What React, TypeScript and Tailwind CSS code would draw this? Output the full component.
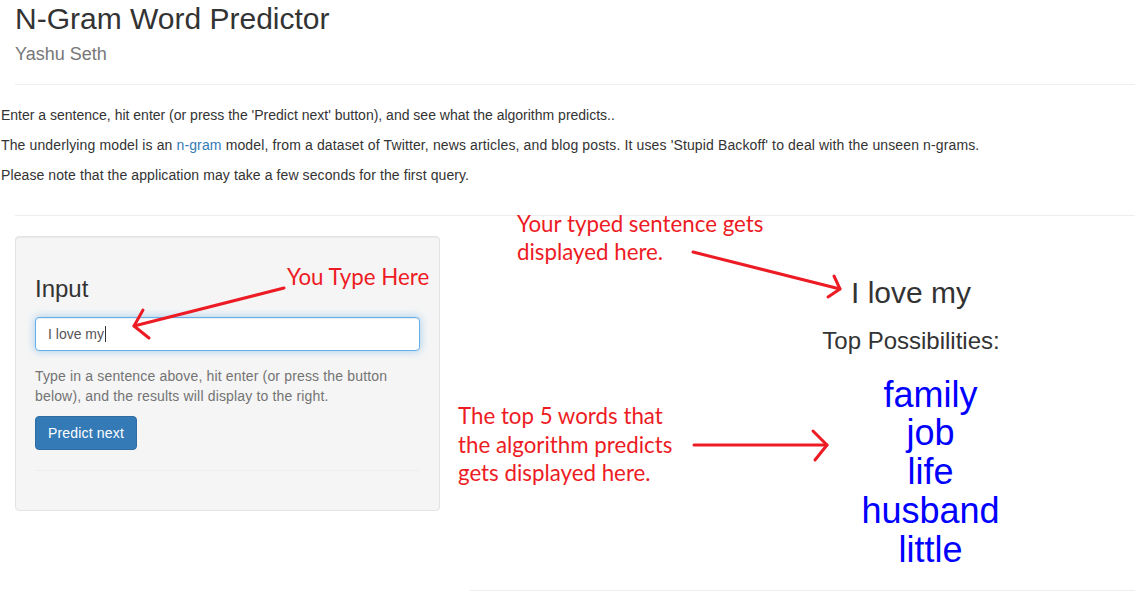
const predictions = ['family', 'job', 'life', 'husband', 'little'];

const annotationFont = { fontFamily: 'Lato, "Open Sans", sans-serif' };

const Annotations = () => (
  <>
    <svg
      className="absolute left-0 top-0 pointer-events-none"
      width="1135"
      height="600"
      viewBox="0 0 1135 600"
      fill="none"
      stroke="#ed1c24"
      strokeWidth="3"
      strokeLinecap="round"
      strokeLinejoin="round"
    >
      {/* you type here */}
      <path d="M284 288 L134 326" />
      <path d="M143 310 L134 326 L149 338" />
      {/* sentence */}
      <path d="M693 252 L840 289" />
      <path d="M834 276 L840 289 L828 297" />
      {/* top words */}
      <path d="M694 445 L827 445" />
      <path d="M813 431 L827 445 L815 460" />
    </svg>
    <div
      className="absolute left-[287px] top-[263px] text-[22.3px] leading-[28px] text-[#ed1c24] whitespace-nowrap"
      style={annotationFont}
    >
      You Type Here
    </div>
    <div
      className="absolute left-[517px] top-[210px] text-[22.3px] leading-[28px] text-[#ed1c24] whitespace-nowrap"
      style={annotationFont}
    >
      Your typed sentence gets
      <br />
      displayed here.
    </div>
    <div
      className="absolute left-[458px] top-[402px] text-[22.3px] leading-[28.5px] text-[#ed1c24] whitespace-nowrap"
      style={annotationFont}
    >
      The top 5 words that
      <br />
      the algorithm predicts
      <br />
      gets displayed here.
    </div>
  </>
);

export default function App() {
  return (
    <div
      className="relative min-h-screen w-full overflow-hidden bg-white text-[#333] text-[14px] leading-[20px]"
      style={{ fontFamily: '"Liberation Sans", Arial, sans-serif' }}
    >
      <div className="px-[15px] pt-[2px]">
        <div className="text-[30px] leading-[33px]">N-Gram Word Predictor</div>
        <div className="text-[18px] leading-[38px] text-[#777]">Yashu Seth</div>
      </div>
      <div className="ml-[15px] mt-[11px] border-t border-[#eee]" />

      <div className="mt-[20px] pl-px">
        <p className="mb-[10px]">
          Enter a sentence, hit enter (or press the 'Predict next' button), and see what the algorithm predicts..
        </p>
        <p className="mb-[10px] tracking-[0.13px]">
          The underlying model is an <a className="text-[#337ab7]">n-gram</a> model, from a dataset of Twitter,
          news articles, and blog posts. It uses 'Stupid Backoff' to deal with the unseen n-grams.
        </p>
        <p className="mb-[10px] tracking-[0.09px]">
          Please note that the application may take a few seconds for the first query.
        </p>
      </div>
      <div className="ml-[15px] mt-[30px] border-t border-[#eee]" />

      <div className="mt-[20px] flex">
        {/* sidebar */}
        <div className="w-[455px] shrink-0 px-[15px]">
          <div className="h-[275px] rounded-[4px] border border-[#e3e3e3] bg-[#f5f5f5] p-[19px] shadow-[inset_0_1px_1px_rgba(0,0,0,0.05)]">
            <div className="mt-[20px] text-[24px] leading-[26.4px]">Input</div>
            <div className="mt-[14.6px] flex h-[34px] items-center rounded-[4px] border border-[#66afe9] bg-white px-[12px] text-[#555] shadow-[inset_0_1px_1px_rgba(0,0,0,0.075),0_0_8px_rgba(102,175,233,0.6)]">
              <span>I love my</span>
              <span className="ml-px h-[16px] w-px bg-[#333]" />
            </div>
            <div className="mt-[15px] text-[#737373] tracking-[0.16px]">
              Type in a sentence above, hit enter (or press the button below), and the results will display to the
              right.
            </div>
            <button className="mt-[10px] h-[34px] rounded-[4px] border border-[#2e6da4] bg-[#337ab7] px-[12px] text-white tracking-[0.17px]">
              Predict next
            </button>
            <div className="mt-[20px] border-t border-[#eee]" />
          </div>
        </div>

        {/* main */}
        <div className="w-[912px] shrink-0 px-[15px] text-center">
          <div className="mt-[40px] text-[30px] leading-[33px]">I love my</div>
          <div className="mt-[19px] text-[24px] leading-[26.4px]">Top Possibilities:</div>
          <ul className="mt-[21.3px] pl-[39px] text-[36px] leading-[38.75px] text-[#0000ff]">
            {predictions.map(word => (
              <li key={word}>{word}</li>
            ))}
          </ul>
          <div className="mt-[20.5px] border-t border-[#eee]" />
        </div>
      </div>

      <Annotations />
    </div>
  );
}
